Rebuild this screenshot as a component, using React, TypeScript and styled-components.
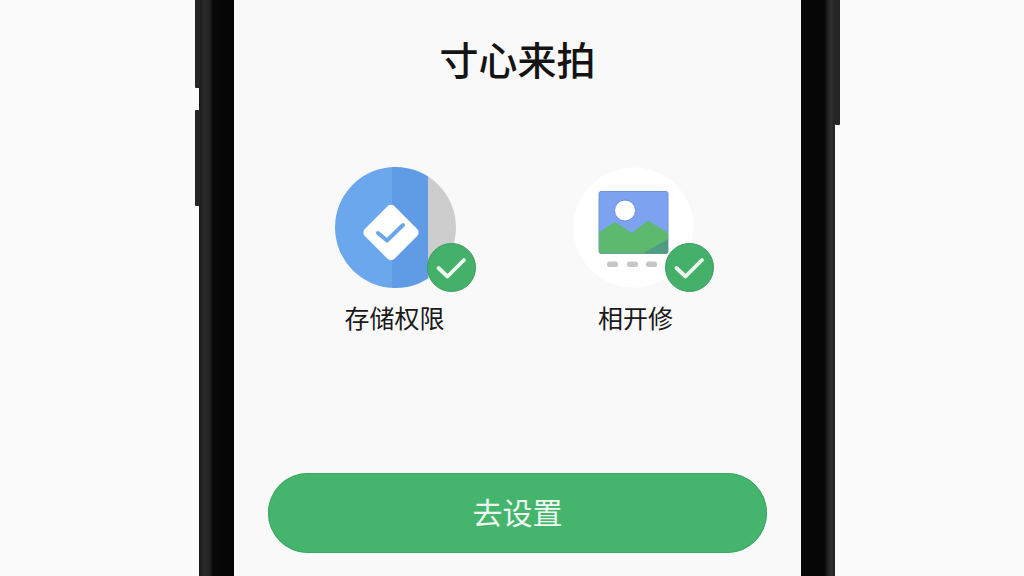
import React from "react";
import styled, { createGlobalStyle } from "styled-components";

const Global = createGlobalStyle`
  html, body { margin: 0; height: 100%; background: #fbfbfb; overflow: hidden; }
  #root { height: 100%; }
`;

const Page = styled.div`
  height: 576px;
  width: 1024px;
  overflow: hidden;
  padding-left: 199px;
  box-sizing: border-box;
  display: flex;
  font-family: "Noto Sans CJK SC", "Noto Sans", sans-serif;
`;

const Bezel = styled.div<{ $side: "left" | "right" }>`
  position: relative;
  width: ${(p) => (p.$side === "left" ? 35 : 34)}px;
  height: 100%;
  flex: none;
  background: ${(p) =>
    p.$side === "left"
      ? "linear-gradient(90deg, #161616 0, #2a2a2a 5px, #222 11px, #080808 14px, #050505 100%)"
      : "linear-gradient(90deg, #070707 0, #050505 23px, #1a1a1a 26px, #303030 30px, #232323 100%)"};
`;

const SideKey = styled.div<{ $side: "left" | "right"; $top: number; $height: number }>`
  position: absolute;
  top: ${(p) => p.$top}px;
  height: ${(p) => p.$height}px;
  width: 5px;
  ${(p) => (p.$side === "left" ? "left: -4px;" : "right: -5px;")}
  background: #262626;
  border-radius: 1px;
`;

const Screen = styled.main`
  width: 567px;
  height: 100%;
  flex: none;
  background: #f9f9f9;
  display: flex;
  flex-direction: column;
  align-items: center;
  box-sizing: border-box;
  padding: 39px 0 23px;
`;

const Title = styled.h1`
  margin: 0;
  font-size: 39px;
  line-height: 38px;
  font-weight: 500;
  color: #141414;
`;

const Permissions = styled.div`
  display: flex;
  gap: 120px;
  margin-top: 90px;
  align-self: flex-start;
  margin-left: 101px;
`;

const Permission = styled.div<{ $width: number }>`
  width: ${(p) => p.$width}px;
  display: flex;
  flex-direction: column;
  align-items: center;
`;

const IconWrap = styled.div`
  position: relative;
  align-self: flex-start;
  width: 121px;
  height: 121px;
`;

const Badge = styled.svg<{ $left: number }>`
  position: absolute;
  left: ${(p) => p.$left}px;
  top: 76px;
  width: 49px;
  height: 49px;
`;

const Label = styled.div`
  margin-top: 15px;
  font-size: 25px;
  line-height: 28px;
  color: #1a1a1a;
  white-space: nowrap;
`;

const Cta = styled.button`
  margin-top: auto;
  width: 499px;
  height: 80px;
  flex: none;
  border: 0;
  border-radius: 40px;
  background: #45b56e;
  box-shadow: inset 0 0 0 1px #3fa866;
  color: #eef7f0;
  font-family: inherit;
  font-size: 30px;
  font-weight: 400;
  padding: 0 0 4px;
`;

function CheckBadge({ left }: { left: number }) {
  return (
    <Badge $left={left} viewBox="0 0 49 49">
      <circle cx="24.5" cy="24.5" r="24" fill="#45b06a" stroke="#3a9c5e" strokeWidth="1" />
      <path d="M11.5 25 L20.5 33.5 L37 17" fill="none" stroke="#eef8f0" strokeWidth="3.8" strokeLinecap="round" strokeLinejoin="round" />
    </Badge>
  );
}

function StorageIcon() {
  return (
    <svg width="121" height="121" viewBox="0 0 121 121">
      <defs>
        <clipPath id="disc"><circle cx="60.5" cy="60.5" r="60.5" /></clipPath>
      </defs>
      <g clipPath="url(#disc)">
        <rect x="0" y="0" width="58" height="121" fill="#6ba7ec" />
        <rect x="57" y="0" width="36" height="121" fill="#5f9ce5" />
        <rect x="93" y="0" width="28" height="121" fill="#cdcdcd" />
      </g>
      <rect x="35" y="44.5" width="42" height="42" rx="5" fill="#fff" transform="rotate(45 56 65.5)" />
      <path d="M43 66 L52 73.5 L68 58" fill="none" stroke="#6aa6ea" strokeWidth="4" strokeLinecap="round" strokeLinejoin="round" />
    </svg>
  );
}

function GalleryIcon() {
  return (
    <svg width="121" height="121" viewBox="0 0 121 121">
      <circle cx="59.5" cy="60.5" r="60" fill="#fff" />
      <rect x="25" y="24.5" width="69" height="62" rx="2" fill="#7ca2f0" stroke="#6f93e0" strokeWidth="1" />
      <circle cx="51" cy="43.5" r="10.5" fill="#fff" stroke="#6a8fe0" strokeWidth="1" />
      <path d="M25 65 L41 55 L58 66 L74 53.5 L94 66 V84.5 a2 2 0 0 1 -2 2 H27 a2 2 0 0 1 -2 -2 Z" fill="#5cb96e" />
      <path d="M69 86.5 L94 72 V84.5 a2 2 0 0 1 -2 2 Z" fill="#509c80" />
      <rect x="33" y="94.5" width="11" height="5.5" rx="2.5" fill="#c6c6c6" />
      <rect x="53" y="94.5" width="11" height="5.5" rx="2.5" fill="#c6c6c6" />
      <rect x="72" y="94.5" width="11" height="5.5" rx="2.5" fill="#c6c6c6" />
    </svg>
  );
}

export default function App() {
  return (
    <>
      <Global />
      <Page>
        <Bezel $side="left">
          <SideKey $side="left" $top={-4} $height={92} />
          <SideKey $side="left" $top={110} $height={96} />
        </Bezel>
        <Screen>
          <Title>寸心来拍</Title>
          <Permissions>
            <Permission $width={119}>
              <IconWrap>
                <StorageIcon />
                <CheckBadge left={92} />
              </IconWrap>
              <Label>存储权限</Label>
            </Permission>
            <Permission $width={123}>
              <IconWrap>
                <GalleryIcon />
                <CheckBadge left={91} />
              </IconWrap>
              <Label>相开修</Label>
            </Permission>
          </Permissions>
          <Cta>去设置</Cta>
        </Screen>
        <Bezel $side="right">
          <SideKey $side="right" $top={-4} $height={129} />
        </Bezel>
      </Page>
    </>
  );
}
